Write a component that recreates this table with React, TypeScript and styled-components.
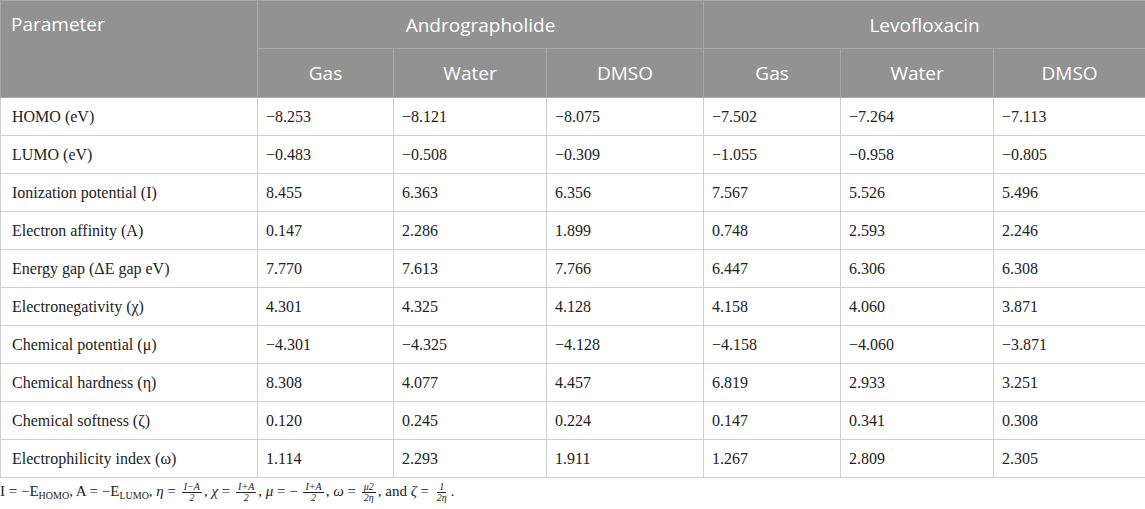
import React, { FC, Fragment } from 'react';
import styled, { createGlobalStyle } from 'styled-components';

const GlobalStyle = createGlobalStyle`
	html, body {
		margin: 0;
		padding: 0;
		background: #ffffff;
	}
`;

const Wrapper = styled('div')`
	width: 1145px;
`;

const Table = styled('table')`
	width: 1145px;
	border-collapse: collapse;
	table-layout: fixed;
`;

const HeadCell = styled('th')<{ $align?: 'left' | 'center'; $h?: number }>`
	background: #929292;
	color: #ffffff;
	font-family: 'Open Sans', 'Noto Sans', sans-serif;
	font-weight: 400;
	font-size: 19px;
	text-align: ${(p) => p.$align || 'center'};
	vertical-align: ${(p) => (p.$align === 'left' ? 'top' : 'middle')};
	height: ${(p) => p.$h || 47}px;
	padding: ${(p) => (p.$align === 'left' ? '10px 10px 0' : '0 8px')};
	border: 1px solid #a9a9a9;
	box-sizing: border-box;
	line-height: 26px;
`;

const Row = styled('tr')``;

const BodyCell = styled('td')<{ $first?: boolean }>`
	font-family: 'Liberation Serif', 'Times New Roman', serif;
	font-size: 16px;
	color: #222222;
	height: 37px;
	padding: 0 ${(p) => (p.$first ? '11px' : '8px')};
	border: 1px solid #cfcfcf;
	white-space: nowrap;
`;

const Footnote = styled('p')`
	margin: 4px 0 0;
	font-family: 'Liberation Serif', 'Times New Roman', serif;
	font-size: 15px;
	color: #222222;
	line-height: 18px;
	white-space: nowrap;
`;

const Sub = styled('sub')`
	font-size: 10px;
	vertical-align: -3px;
	line-height: 0;
`;

const Frac = styled('span')`
	display: inline-flex;
	flex-direction: column;
	align-items: center;
	vertical-align: middle;
	font-size: 10px;
	line-height: 10px;
	margin: 0 2px;
	font-style: italic;
`;

const Num = styled('span')`
	border-bottom: 1px solid #222222;
	padding: 0 2px;
`;

const Den = styled('span')`
	padding: 0 2px;
`;

const Var = styled('i')`
	font-style: italic;
`;

const Fraction: FC<{ top: string; bottom: string }> = ({ top, bottom }) => (
	<Frac>
		<Num>{top}</Num>
		<Den>{bottom}</Den>
	</Frac>
);

const rows: [string, string[]][] = [
	['HOMO (eV)', ['−8.253', '−8.121', '−8.075', '−7.502', '−7.264', '−7.113']],
	['LUMO (eV)', ['−0.483', '−0.508', '−0.309', '−1.055', '−0.958', '−0.805']],
	['Ionization potential (I)', ['8.455', '6.363', '6.356', '7.567', '5.526', '5.496']],
	['Electron affinity (A)', ['0.147', '2.286', '1.899', '0.748', '2.593', '2.246']],
	['Energy gap (ΔE gap eV)', ['7.770', '7.613', '7.766', '6.447', '6.306', '6.308']],
	['Electronegativity (χ)', ['4.301', '4.325', '4.128', '4.158', '4.060', '3.871']],
	['Chemical potential (μ)', ['−4.301', '−4.325', '−4.128', '−4.158', '−4.060', '−3.871']],
	['Chemical hardness (η)', ['8.308', '4.077', '4.457', '6.819', '2.933', '3.251']],
	['Chemical softness (ζ)', ['0.120', '0.245', '0.224', '0.147', '0.341', '0.308']],
	['Electrophilicity index (ω)', ['1.114', '2.293', '1.911', '1.267', '2.809', '2.305']],
];

const widths = [257, 136, 153, 157, 137, 153, 152];
const solvents = ['Gas', 'Water', 'DMSO'];

const App: FC = () => {
	return (
		<Fragment>
			<GlobalStyle />
			<Wrapper>
				<Table>
					<colgroup>
						{widths.map((w, i) => (
							<col key={i} style={{ width: w }} />
						))}
					</colgroup>
					<thead>
						<Row>
							<HeadCell rowSpan={2} $align={'left'}>
								{'Parameter'}
							</HeadCell>
							<HeadCell colSpan={3} $h={48}>
								{'Andrographolide'}
							</HeadCell>
							<HeadCell colSpan={3} $h={48}>
								{'Levofloxacin'}
							</HeadCell>
						</Row>
						<Row>
							{[...solvents, ...solvents].map((s, i) => (
								<HeadCell key={i} $h={49}>
									{s}
								</HeadCell>
							))}
						</Row>
					</thead>
					<tbody>
						{rows.map(([label, values]) => (
							<Row key={label}>
								<BodyCell $first={true}>{label}</BodyCell>
								{values.map((v, i) => (
									<BodyCell key={i}>{v}</BodyCell>
								))}
							</Row>
						))}
					</tbody>
				</Table>
				<Footnote>
					{'I = −E'}
					<Sub>{'HOMO'}</Sub>
					{', A = −E'}
					<Sub>{'LUMO'}</Sub>
					{', '}
					<Var>{'η'}</Var>
					{' = '}
					<Fraction top={'I−A'} bottom={'2'} />
					{', '}
					<Var>{'χ'}</Var>
					{' = '}
					<Fraction top={'I+A'} bottom={'2'} />
					{', '}
					<Var>{'μ'}</Var>
					{' = − '}
					<Fraction top={'I+A'} bottom={'2'} />
					{', '}
					<Var>{'ω'}</Var>
					{' = '}
					<Fraction top={'μ2'} bottom={'2η'} />
					{', and '}
					<Var>{'ζ'}</Var>
					{' = '}
					<Fraction top={'1'} bottom={'2η'} />
					{'.'}
				</Footnote>
			</Wrapper>
		</Fragment>
	);
};

export default App;
